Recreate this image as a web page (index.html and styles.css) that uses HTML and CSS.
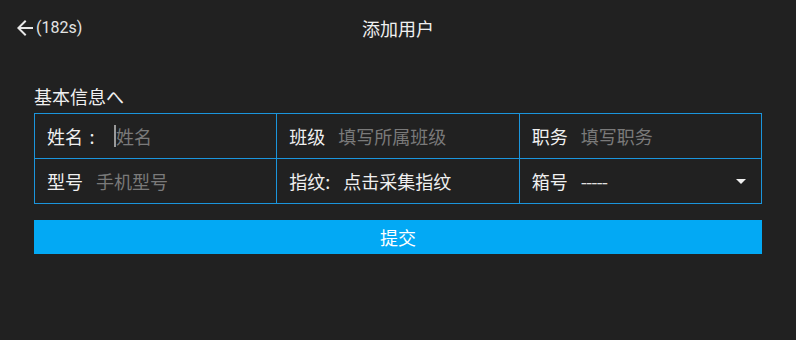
FILE: index.html
```html
<!DOCTYPE html>
<html lang="zh-CN">
<head>
<meta charset="utf-8">
<title>添加用户</title>
<link rel="stylesheet" href="styles.css">
</head>
<body>
<div class="screen">
  <header class="topbar">
    <div class="back">
      <svg class="back-icon" viewBox="0 0 24 24" width="24" height="24"><path d="M20 11H7.83l5.59-5.59L12 4l-8 8 8 8 1.41-1.41L7.83 13H20v-2z" fill="#e8e8e8"/></svg>
      <span class="countdown">(182s)</span>
    </div>
    <h1 class="title">添加用户</h1>
  </header>
  <main class="content">
    <h2 class="section-title">基本信息へ</h2>
    <div class="form-grid">
      <div class="cell"><span class="label">姓名<span class="colon">:</span></span><span class="cursor"></span><span class="placeholder">姓名</span></div>
      <div class="cell"><span class="label">班级</span><span class="placeholder">填写所属班级</span></div>
      <div class="cell"><span class="label">职务</span><span class="placeholder">填写职务</span></div>
      <div class="cell"><span class="label">型号</span><span class="placeholder">手机型号</span></div>
      <div class="cell"><span class="label">指纹:</span><span class="value">点击采集指纹</span></div>
      <div class="cell select"><span class="label">箱号</span><span class="value dashes">-----</span><span class="caret"></span></div>
    </div>
    <button class="submit">提交</button>
  </main>
</div>
</body>
</html>
```
FILE: styles.css
```css
* { box-sizing: border-box; }
html, body { margin: 0; padding: 0; }
body {
  background: #212121;
  font-family: "Noto Sans CJK SC", "Noto Sans", sans-serif;
  color: #ececec;
  width: 796px;
  height: 340px;
  overflow: hidden;
}
.screen { width: 796px; height: 340px; }
.topbar {
  position: relative;
  height: 56px;
  display: flex;
  align-items: center;
  justify-content: center;
}
.back {
  position: absolute;
  left: 13px;
  top: 16px;
  display: flex;
  align-items: center;
  height: 24px;
}
.back-icon { display: block; }
.countdown {
  font-family: Roboto, "Liberation Sans", sans-serif;
  font-size: 16px;
  color: #e4e4e4;
  margin-left: -1px;
  line-height: 24px;
}
.title {
  margin: 0;
  font-size: 18px;
  font-weight: normal;
  color: #f0f0f0;
  line-height: 24px;
}
.content { padding: 0 34px; }
.section-title {
  margin: 28px 0 5px;
  font-size: 18px;
  font-weight: normal;
  line-height: 24px;
  color: #f0f0f0;
  height: 24px;
}
.form-grid {
  display: grid;
  grid-template-columns: 1fr 1fr 1fr;
  gap: 1px;
  padding: 1px;
  background: #1b95dc;
  width: 728px;
}
.cell {
  background: #212121;
  height: 44px;
  display: flex;
  align-items: center;
  padding-left: 12px;
  font-size: 18px;
  line-height: 24px;
  white-space: nowrap;
}
.label { color: #f0f0f0; margin-right: 13px; }
.colon {
  display: inline-block;
  width: 18px;
  text-align: center;
}
.placeholder { color: #7a7a7a; }
.value { color: #f0f0f0; }
.cursor {
  width: 2px;
  height: 22px;
  background: #9a9a9a;
}
.dashes { font-size: 18px; color: #e0e0e0; letter-spacing: -1px; }
.caret {
  margin-left: auto;
  margin-right: 15px;
  width: 0;
  height: 0;
  border-left: 5px solid transparent;
  border-right: 5px solid transparent;
  border-top: 5px solid #f0f0f0;
}
.submit {
  display: block;
  width: 728px;
  height: 34px;
  margin-top: 16px;
  border: none;
  background: #03a9f4;
  color: #ffffff;
  font-family: "Noto Sans CJK SC", sans-serif;
  font-size: 18px;
  line-height: 34px;
  padding: 0;
}
```
